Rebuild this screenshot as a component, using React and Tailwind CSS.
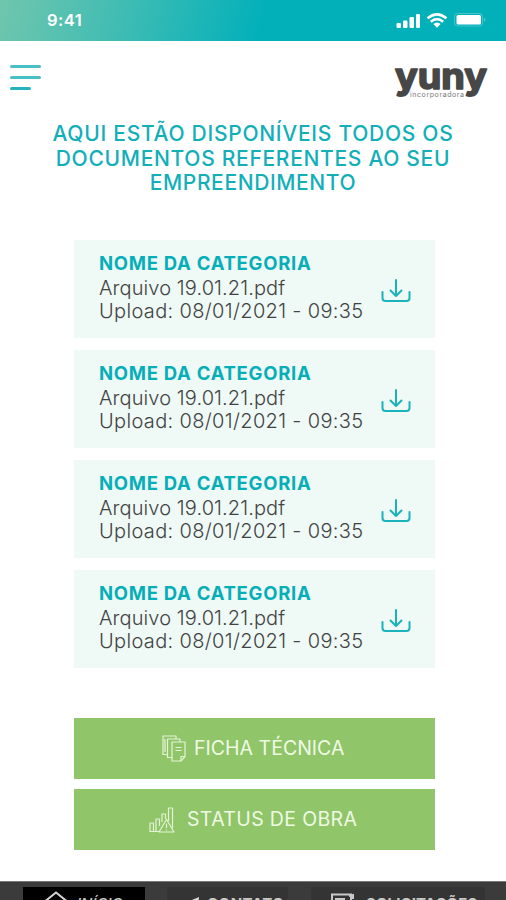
import { useState } from "react";

const documents = [
  { id: 1, category: "NOME DA CATEGORIA", file: "Arquivo 19.01.21.pdf", upload: "08/01/2021 - 09:35" },
  { id: 2, category: "NOME DA CATEGORIA", file: "Arquivo 19.01.21.pdf", upload: "08/01/2021 - 09:35" },
  { id: 3, category: "NOME DA CATEGORIA", file: "Arquivo 19.01.21.pdf", upload: "08/01/2021 - 09:35" },
  { id: 4, category: "NOME DA CATEGORIA", file: "Arquivo 19.01.21.pdf", upload: "08/01/2021 - 09:35" },
];

const StatusBar = () => (
  <div className="h-[41px] shrink-0 flex items-center justify-between pl-[47px] pr-[18px] text-white bg-[linear-gradient(105deg,#70c6ad_0%,#45bdb3_22%,#02b0ba_52%,#02b0ba_100%)]">
    <span className="text-[16.5px] font-semibold leading-5 tracking-[0.5px] -mt-[2px]">9:41</span>
    <svg width="92" height="17" viewBox="0 0 92 17" fill="currentColor">
      <rect x="0.5" y="11" width="4.5" height="5" rx="1.2" />
      <rect x="7" y="8.5" width="4.5" height="7.5" rx="1.2" />
      <rect x="13.5" y="5" width="4.5" height="11" rx="1.2" />
      <rect x="20" y="2" width="4" height="14" rx="1.2" />
      <g fill="none" stroke="currentColor" strokeWidth="2.6">
        <path d="M31.5 6.2 Q41 -1.6 50.5 6.2" />
        <path d="M34.8 9.7 Q41 4.500 47.2 9.7" />
      </g>
      <path d="M37.3 12 Q41 9 44.7 12 L41 15.7 Z" />
      <rect x="58.5" y="1.5" width="28" height="12.5" rx="3" fill="none" stroke="currentColor" strokeOpacity="0.25" />
      <rect x="60.5" y="3" width="24.5" height="9.5" rx="1.5" />
      <path d="M88 5.5 q3 2 0 4.5 Z" opacity="0.3" />
    </svg>
  </div>
);

const Logo = () => (
  <svg width="96" height="38" viewBox="0 0 96 38" role="img" aria-label="yuny incorporadora">
    <g transform="scale(1 0.83)">
      <text
        x="2"
        y="29.5"
        fontSize="43"
        textLength="92"
        lengthAdjust="spacingAndGlyphs"
        className="font-['Inter'] font-bold fill-[#474747] stroke-[#474747]"
        strokeWidth="2"
        strokeLinejoin="round"
      >
        yuny
      </text>
    </g>
    <text x="17" y="31.5" fontSize="7" textLength="54" className="font-['Inter'] fill-[#777777]">
      incorporadora
    </text>
  </svg>
);

const DownloadIcon = () => (
  <svg width="30" height="26" viewBox="0 0 30 26" fill="none" stroke="#1bb3bb" strokeWidth="2" strokeLinecap="round" strokeLinejoin="round">
    <path d="M15 2 V18 M9.5 12.5 L15 18 L20.5 12.5" />
    <path d="M1.5 14 V20 Q1.5 23 4.5 23 H25.5 Q28.5 23 28.5 20 V14" />
  </svg>
);

const DocumentsIcon = () => (
  <svg width="24" height="27" viewBox="0 0 24 27" fill="none" stroke="#e4f3d5" strokeWidth="1.2" strokeLinejoin="round">
    <path d="M5 19.5 H1 V1 H14 V4" />
    <path d="M10 22.5 H5.5 V4 H18 V7" />
    <path d="M10 7 H23 V21.5 L19 26 H10 Z" />
    <path d="M19 26 V21.5 H23 M13.5 12.5 H19.5 M13.5 15.5 H19.5 M3 4 V17" />
  </svg>
);

const ChartIcon = () => (
  <svg width="26" height="26" viewBox="0 0 26 26" fill="none" stroke="#e4f3d5" strokeWidth="1.2" strokeLinejoin="round">
    <path d="M10 24.5 H1 V16 H4.500 V24.5 M7 24.5 V12 H10.5 V19 M13 15 V7 H16.5 V12 M19.5 14 V1 H23.5 V21" />
    <path d="M17.5 12.5 L25 25 H10 Z" />
    <path d="M17.5 16.5 V21 M17.5 22.5 V23.5" />
  </svg>
);

const HomeIcon = () => (
  <svg width="28" height="24" viewBox="0 0 28 24" fill="none" stroke="#d5d5d5" strokeWidth="2">
    <path d="M1 12 L14 1.5 L27 12 M5 10 V23 H23 V10" />
  </svg>
);

const ContactIcon = () => (
  <svg width="16" height="20" viewBox="0 0 16 20" fill="#d5d5d5">
    <path d="M0 5 L12 0 L11 15 L6 10 Z" />
  </svg>
);

const RequestIcon = () => (
  <svg width="25" height="22" viewBox="0 0 25 22" fill="none" stroke="#c8c8c8" strokeWidth="2">
    <path d="M1 1.5 H20 V20 H1 Z M5 6 H13 V12 H5 Z" />
    <path d="M18 3 L22 2 V6" />
  </svg>
);

const DocumentCard = ({ doc }) => (
  <div className="h-[98px] flex items-center justify-between bg-[#eff9f6] pl-[25px] pr-6">
    <div className="pb-[6px] whitespace-nowrap">
      <h2 className="text-[18.5px] leading-[28px] font-bold tracking-[0.72px] text-[#06afb8]">{doc.category}</h2>
      <p className="text-[20px] leading-[23.5px] font-light tracking-[0.1px] text-[#3f4343]">{doc.file}</p>
      <p className="text-[20px] leading-[23.5px] font-light tracking-[0.34px] text-[#3f4343]">Upload: {doc.upload}</p>
    </div>
    <button type="button" aria-label="Baixar" className="pt-[3px]">
      <DownloadIcon />
    </button>
  </div>
);

const App = () => {
  const [menuOpen, setMenuOpen] = useState(false);

  return (
    <div className="w-[506px] h-[900px] overflow-hidden flex flex-col bg-white font-['Inter',sans-serif]">
      <StatusBar />
      <header className="h-[81px] shrink-0 flex items-start justify-between pl-[10px] pr-[17px] pt-[24px]">
        <button
          type="button"
          aria-label="Menu"
          aria-expanded={menuOpen}
          onClick={() => setMenuOpen(!menuOpen)}
          className="flex flex-col gap-2"
        >
          <span className="w-[31px] h-[3px] rounded-full bg-[#49bec5]" />
          <span className="w-[31px] h-[3px] rounded-full bg-[#49bec5]" />
          <span className="w-[21px] h-[3px] rounded-full bg-[#25b4bd]" />
        </button>
        <Logo />
      </header>

      <h1 className="h-[118px] shrink-0 text-center text-[21px] leading-[24.5px] font-medium text-[#12afb9] whitespace-nowrap">
        <span className="block tracking-[0.73px]">AQUI ESTÃO DISPONÍVEIS TODOS OS</span>
        <span className="block tracking-[0.7px]">DOCUMENTOS REFERENTES AO SEU</span>
        <span className="block tracking-[0.62px]">EMPREENDIMENTO</span>
      </h1>

      <main className="ml-[74px] w-[361px] shrink-0 flex flex-col gap-3">
        {documents.map((doc) => (
          <DocumentCard key={doc.id} doc={doc} />
        ))}
      </main>

      <div className="ml-[74px] w-[361px] mt-[50px] shrink-0 flex flex-col gap-[10px] text-[19.5px] text-[#effae5] whitespace-nowrap">
        <button type="button" className="h-[61px] flex items-center pl-[88px] bg-[#91c569]">
          <DocumentsIcon />
          <span className="ml-2 tracking-[0.02px]">FICHA TÉCNICA</span>
        </button>
        <button type="button" className="h-[61px] flex items-center pl-[75px] bg-[#91c569]">
          <ChartIcon />
          <span className="ml-3 tracking-[0.36px]">STATUS DE OBRA</span>
        </button>
      </div>

      <nav className="mt-[31px] h-[60px] shrink-0 flex items-start pt-[5px] pl-[23px] bg-[#3b3b3b] border-t border-[#777777] text-[15px] font-bold text-[#c8c8c8] whitespace-nowrap">
        <a className="w-[122px] h-12 flex items-start pt-1 pl-[19px] bg-black">
          <HomeIcon />
          <span className="ml-[7px] mt-[3px] leading-5 font-medium italic">INÍCIO</span>
        </a>
        <a className="ml-[22px] w-[121px] h-12 flex items-start pt-[10px] pl-5 bg-[#343434]">
          <ContactIcon />
          <span className="ml-1 -mt-[3px] leading-5 tracking-[0.5px]">CONTATO</span>
        </a>
        <a className="ml-[23px] w-[174px] h-12 flex items-start pt-[6px] pl-5 bg-[#343434]">
          <RequestIcon />
          <span className="ml-[10px] mt-[1px] leading-5 tracking-[0.1px]">SOLICITAÇÕES</span>
        </a>
      </nav>
    </div>
  );
};

export default App;
